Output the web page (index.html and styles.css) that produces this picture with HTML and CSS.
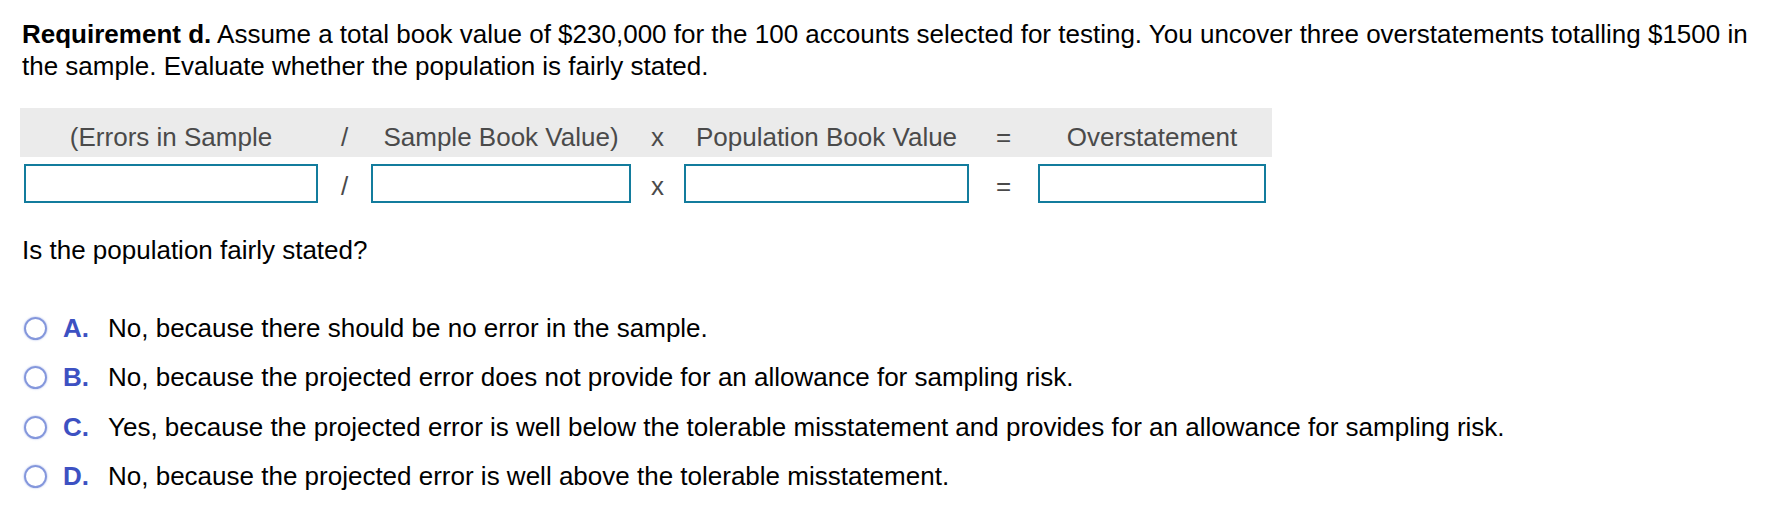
FILE: index.html
```html
<!DOCTYPE html>
<html lang="en">
<head>
<meta charset="utf-8">
<title>Requirement d</title>
<link rel="stylesheet" href="styles.css">
</head>
<body>
<main class="page">
  <p class="prompt"><strong>Requirement d.</strong> Assume a total book value of $230,000 for the 100 accounts selected for testing. You uncover three overstatements totalling $1500 in the sample. Evaluate whether the population is fairly stated.</p>

  <div class="formula">
    <div class="formula-head">
      <span>(Errors in Sample</span>
      <span>/</span>
      <span>Sample Book Value)</span>
      <span>x</span>
      <span>Population Book Value</span>
      <span>=</span>
      <span>Overstatement</span>
    </div>
    <div class="formula-row">
      <input class="cell" type="text" aria-label="Errors in Sample">
      <span class="op">/</span>
      <input class="cell" type="text" aria-label="Sample Book Value">
      <span class="op">x</span>
      <input class="cell" type="text" aria-label="Population Book Value">
      <span class="op">=</span>
      <input class="cell" type="text" aria-label="Overstatement">
    </div>
  </div>

  <p class="question">Is the population fairly stated?</p>

  <ul class="options">
    <li class="option"><span class="radio"></span><span class="letter">A.</span><span>No, because there should be no error in the sample.</span></li>
    <li class="option"><span class="radio"></span><span class="letter">B.</span><span>No, because the projected error does not provide for an allowance for sampling risk.</span></li>
    <li class="option"><span class="radio"></span><span class="letter">C.</span><span>Yes, because the projected error is well below the tolerable misstatement and provides for an allowance for sampling risk.</span></li>
    <li class="option"><span class="radio"></span><span class="letter">D.</span><span>No, because the projected error is well above the tolerable misstatement.</span></li>
  </ul>
</main>
</body>
</html>
```

FILE: styles.css
```css
html, body {
  margin: 0;
  padding: 0;
  background: #ffffff;
}

body {
  font-family: "Liberation Sans", Arial, Helvetica, sans-serif;
  font-size: 26px;
  color: #000000;
}

.page {
  padding: 19px 10px 0 22px;
}

.prompt {
  margin: 0;
  line-height: 31.5px;
}

.prompt strong {
  font-weight: bold;
}

.formula {
  margin: 26px 0 0 -2px;
}

.formula-head,
.formula-row {
  display: grid;
  grid-template-columns: 294px 53px 260px 53px 285px 69px 228px;
  width: max-content;
}

.formula-head {
  height: 49px;
  box-sizing: border-box;
  padding: 10px 6px 0 4px;
  line-height: 39px;
  text-align: center;
  color: #4a4a4a;
  background: #ebebeb;
  white-space: nowrap;
}

.formula-row {
  margin-top: 7px;
  padding-left: 4px;
  align-items: start;
  color: #4a4a4a;
}

.op {
  text-align: center;
  line-height: 39px;
  padding-top: 3px;
}

.cell {
  box-sizing: border-box;
  width: 100%;
  height: 39px;
  margin: 0;
  padding: 0 6px;
  border: 2px solid #137c9d;
  border-radius: 0;
  background: #ffffff;
  font: inherit;
  outline: none;
}

.question {
  margin: 29px 0 0;
  line-height: 31.5px;
}

.options {
  list-style: none;
  margin: 46px 0 0;
  padding: 0;
  display: flex;
  flex-direction: column;
  gap: 18px;
}

.option {
  display: flex;
  align-items: center;
  line-height: 31.5px;
}

.radio {
  box-sizing: border-box;
  width: 23px;
  height: 23px;
  margin-left: 2px;
  margin-right: 16px;
  border: 2px solid #8497dc;
  border-radius: 50%;
  box-shadow: 0 0 1.5px 0.5px rgba(150, 168, 230, 0.55);
  flex: none;
}

.letter {
  width: 45px;
  flex: none;
  font-weight: bold;
  color: #3d51c2;
}
```
